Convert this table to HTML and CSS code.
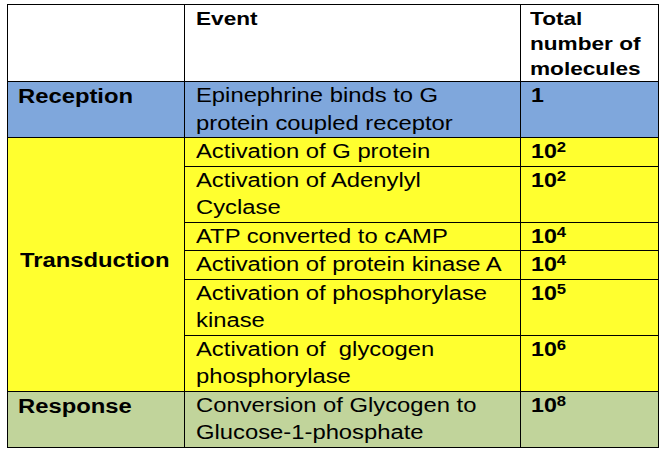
FILE: index.html
```html
<!DOCTYPE html>
<html lang="en">
<head>
<meta charset="utf-8">
<title>Signal amplification</title>
<link rel="stylesheet" href="styles.css">
</head>
<body>
<table class="tbl">
  <colgroup>
    <col class="c1">
    <col class="c2">
    <col class="c3">
  </colgroup>
  <thead>
    <tr class="head">
      <th></th>
      <th><span class="t">Event</span></th>
      <th><span class="t">Total<br>number of<br>molecules</span></th>
    </tr>
  </thead>
  <tbody>
    <tr class="blue">
      <td class="stage"><span class="t">Reception</span></td>
      <td class="ev"><span class="t">Epinephrine binds to G<br>protein coupled receptor</span></td>
      <td class="num"><span class="t">1</span></td>
    </tr>
    <tr class="yellow">
      <td class="stage mid" rowspan="6"><span class="t">Transduction</span></td>
      <td class="ev"><span class="t">Activation of G protein</span></td>
      <td class="num"><span class="t">10<span class="sup">2</span></span></td>
    </tr>
    <tr class="yellow">
      <td class="ev"><span class="t">Activation of Adenylyl<br>Cyclase</span></td>
      <td class="num"><span class="t">10<span class="sup">2</span></span></td>
    </tr>
    <tr class="yellow">
      <td class="ev"><span class="t">ATP converted to cAMP</span></td>
      <td class="num"><span class="t">10<span class="sup">4</span></span></td>
    </tr>
    <tr class="yellow">
      <td class="ev"><span class="t">Activation of protein kinase A</span></td>
      <td class="num"><span class="t">10<span class="sup">4</span></span></td>
    </tr>
    <tr class="yellow">
      <td class="ev"><span class="t">Activation of phosphorylase<br>kinase</span></td>
      <td class="num"><span class="t">10<span class="sup">5</span></span></td>
    </tr>
    <tr class="yellow">
      <td class="ev"><span class="t">Activation of &nbsp;glycogen<br>phosphorylase</span></td>
      <td class="num"><span class="t">10<span class="sup">6</span></span></td>
    </tr>
    <tr class="green">
      <td class="stage"><span class="t">Response</span></td>
      <td class="ev"><span class="t">Conversion of Glycogen to<br>Glucose-1-phosphate</span></td>
      <td class="num"><span class="t">10<span class="sup">8</span></span></td>
    </tr>
  </tbody>
</table>
</body>
</html>
```
FILE: styles.css
```css
html, body {
  margin: 0;
  padding: 0;
  background: #ffffff;
}
body {
  padding: 4px 0 0 7px;
  font-family: "Liberation Sans", Arial, Helvetica, sans-serif;
  color: #000000;
}
.tbl {
  border-collapse: collapse;
  table-layout: fixed;
  width: 651px;
}
.c1 { width: 177px; }
.c2 { width: 336px; }
.c3 { width: 138px; }
.tbl th, .tbl td {
  border: 1px solid #000000;
  padding: 0;
  vertical-align: top;
  text-align: left;
  overflow: visible;
}
.t {
  display: inline-block;
  white-space: nowrap;
  transform: scaleX(1.19);
  transform-origin: 0 0;
}
.head th {
  font-weight: bold;
  font-size: 19px;
  line-height: 25px;
  padding: 1px 0 0 11px;
}
.head th:last-child { padding-left: 9px; }
.tbl td {
  font-size: 20px;
  line-height: 27.5px;
}
.stage {
  font-weight: bold;
  padding: 1px 0 0 10px !important;
}
.stage.mid {
  vertical-align: middle;
  padding: 0 0 8px 12px !important;
}
.ev {
  padding-left: 11px !important;
}
.num {
  font-weight: bold;
  font-size: 19.5px !important;
  padding-left: 10px !important;
}
.sup {
  font-size: 14px;
  line-height: 0;
  vertical-align: 6px;
}
.blue td { background: #7fa7dc; }
.yellow td { background: #ffff2f; }
.green td { background: #c1d49b; }
```
